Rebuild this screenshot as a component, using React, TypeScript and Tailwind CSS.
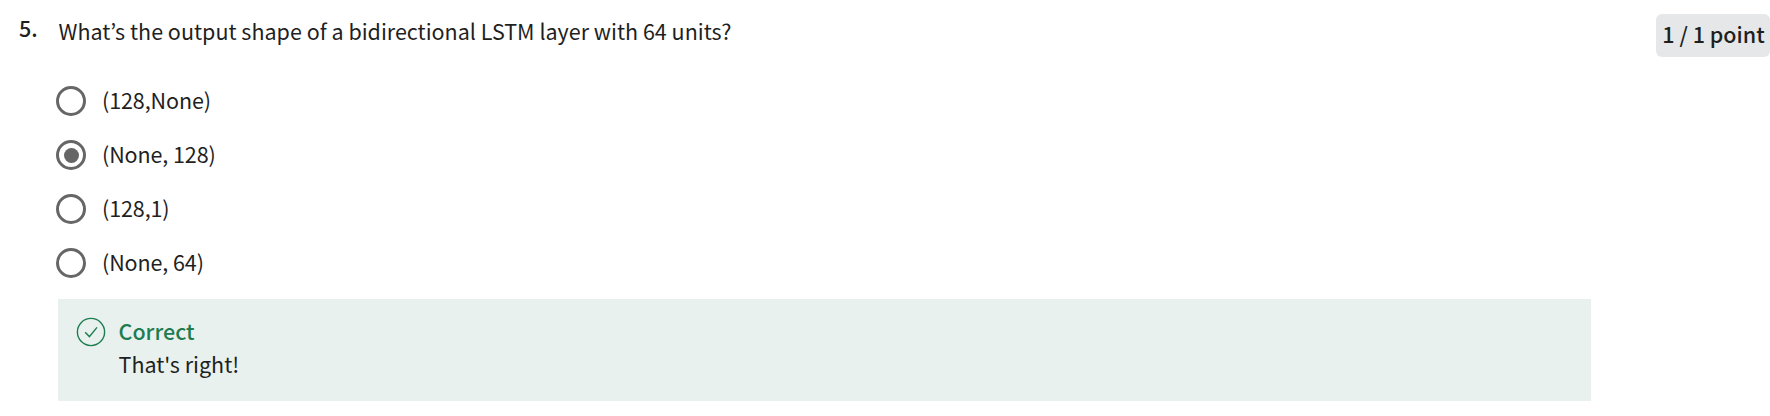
const options = [
  { label: "(128,None)" },
  { label: "(None, 128)", checked: true },
  { label: "(128,1)" },
  { label: "(None, 64)" },
];

export default function App() {
  return (
    <main
      lang="en"
      className="h-[416px] w-[1770px] overflow-hidden bg-white font-['Noto_Sans_CJK_KR','Noto_Sans',sans-serif] text-[21.5px] leading-[30px] text-[#1f1f1f]"
    >
      <div className="flex items-start pt-[14px]">
        <div className="-mt-px w-[58px] shrink-0 whitespace-nowrap pl-[19px] font-medium">5.</div>
        <section className="w-[1533px] shrink-0">
          <h1 className="whitespace-nowrap pl-[0.5px] pt-[2px] font-normal">
            What’s the output shape of a bidirectional LSTM layer with 64 units?
          </h1>
          <div className="mt-[28px]">
            {options.map((option) => (
              <label key={option.label} className="flex h-[54px] items-center gap-[16px] -ml-[2px]">
                <span className="flex size-[30px] shrink-0 items-center justify-center rounded-full border-[3px] border-[#666]">
                  {option.checked && <span className="size-[15px] rounded-full bg-[#666]" />}
                </span>
                <span className="whitespace-nowrap pb-[3px] tracking-[-0.1px]">{option.label}</span>
              </label>
            ))}
          </div>
          <div className="mt-[9px] flex h-[102px] gap-[12.5px] bg-[#e8f1ee] pl-[18px] pt-[18px]">
            <svg className="size-[30px] shrink-0" viewBox="0 0 30 30" fill="none" stroke="#1d7c50" strokeWidth="1.4">
              <circle cx="15" cy="15" r="13.6" />
              <path d="M9.2 15.2 13.4 19.6 21 10.4" />
            </svg>
            <div className="leading-[33px] -mt-[3px]">
              <div className="font-medium text-[#1d7c50]">Correct</div>
              <div>That's right!</div>
            </div>
          </div>
        </section>
        <div className="ml-auto flex h-[43px] w-[114px] shrink-0 items-center justify-center whitespace-nowrap rounded-[6px] bg-[#e5e7e8] pb-[4px] pl-px font-medium">
          1 / 1 point
        </div>
      </div>
    </main>
  );
}
